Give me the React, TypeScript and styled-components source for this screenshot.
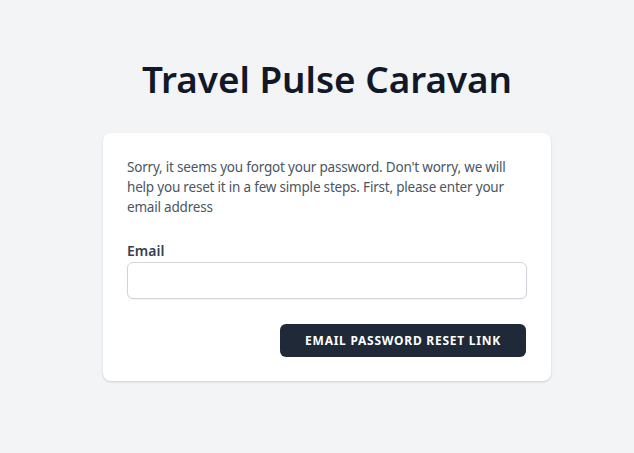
import React from "react";
import styled, { createGlobalStyle } from "styled-components";

const Global = createGlobalStyle`
  html, body { margin: 0; padding: 0; background: #f3f4f6; }
  body { font-family: "Noto Sans", "Open Sans", sans-serif; -webkit-font-smoothing: antialiased; }
  * { box-sizing: border-box; }
`;

const Page = styled.div`
  min-height: 453px;
  display: flex;
  flex-direction: column;
  align-items: center;
  padding-top: 59px;
  padding-left: 20px;
`;

const Title = styled.h1`
  margin: 0 0 34px;
  font-size: 36.8px;
  line-height: 40px;
  font-weight: 600;
  color: #111827;
`;

const Card = styled.div`
  width: 448px;
  background: #fff;
  border-radius: 8px;
  box-shadow: 0 1px 3px rgba(0, 0, 0, 0.1), 0 1px 2px rgba(0, 0, 0, 0.06);
  padding: 24px;
`;

const Text = styled.p`
  margin: 0 0 24px;
  font-size: 13.5px;
  letter-spacing: -0.2px;
  line-height: 20px;
  color: #4b5563;
`;

const Label = styled.label`
  display: block;
  font-size: 14px;
  line-height: 20px;
  font-weight: 600;
  color: #374151;
`;

const Input = styled.input`
  display: block;
  width: 100%;
  height: 37px;
  margin-top: 1px;
  border: 1px solid #d1d5db;
  border-radius: 6px;
  box-shadow: 0 1px 2px rgba(0, 0, 0, 0.05);
  outline: none;
  font: inherit;
  padding: 0 12px;
`;

const Actions = styled.div`
  display: flex;
  justify-content: flex-end;
  margin-top: 25px;
`;

const Button = styled.button`
  height: 33px;
  width: 246px;
  padding: 0;
  background: #1f2937;
  color: #fff;
  border: none;
  border-radius: 6px;
  font-family: inherit;
  font-size: 12px;
  font-weight: 700;
  letter-spacing: 0.75px;
  text-transform: uppercase;
  margin-right: 1px;
`;

export default function App() {
  return (
    <>
      <Global />
      <Page>
        <Title>Travel Pulse Caravan</Title>
        <Card>
          <Text>
            Sorry, it seems you forgot your password. Don't worry, we will help you reset it in a
            few simple steps. First, please enter your email address
          </Text>
          <Label htmlFor="email">Email</Label>
          <Input id="email" type="email" />
          <Actions>
            <Button>Email Password Reset Link</Button>
          </Actions>
        </Card>
      </Page>
    </>
  );
}
